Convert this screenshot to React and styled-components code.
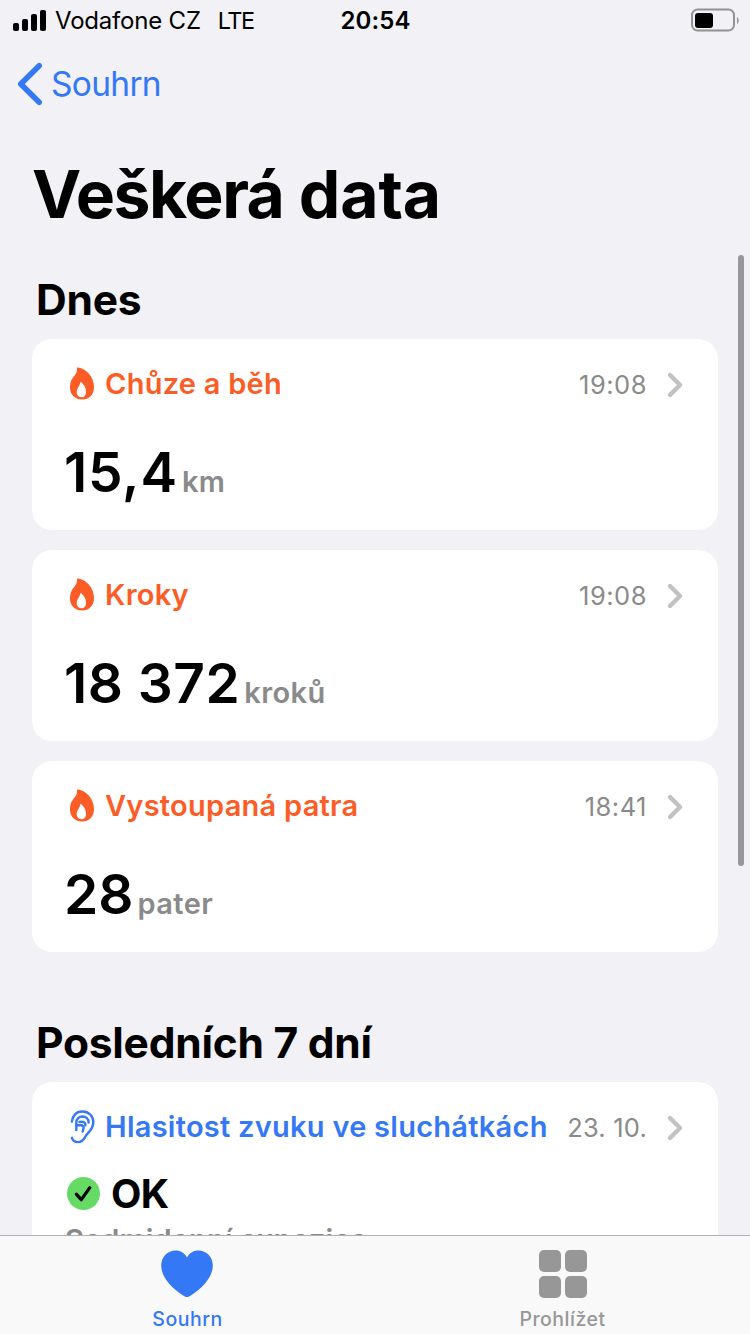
import React from 'react';
import styled, { createGlobalStyle } from 'styled-components';

const BLUE = '#3478f6';
const ORANGE = '#fc5c25';
const GRAY = '#8a8a8b';

const GlobalStyle = createGlobalStyle`
  *, *::before, *::after { box-sizing: border-box; }
  body { margin: 0; background: #f1f1f6; }
  svg { display: block; flex: none; overflow: visible; }
`;

const Screen = styled.main`
  position: relative;
  width: 750px;
  height: 1334px;
  overflow: hidden;
  background: #f1f1f6;
  color: #000;
  font-family: Inter, 'Liberation Sans', sans-serif;
  white-space: nowrap;
`;

const StatusBar = styled.header`
  display: grid;
  grid-template-columns: 1fr auto 1fr;
  align-items: center;
  height: 40px;
  padding: 0 11px 0 13px;
  font-size: 24px;
  line-height: 40px;
`;

const Carrier = styled.div`
  display: flex;
  align-items: center;
`;

const CarrierName = styled.span`
  margin: 1px 17px 0 9px;
  letter-spacing: -0.2px;
`;

const Network = styled.span`
  margin-top: 1px;
  font-size: 23.5px;
  letter-spacing: -1.5px;
`;

const Clock = styled.time`
  margin: 1px 1px 0 0;
  font-weight: 600;
  letter-spacing: 0.1px;
`;

const BatterySlot = styled.div`
  display: flex;
  justify-content: flex-end;
`;

const BackLink = styled.nav`
  display: flex;
  align-items: center;
  gap: 8px;
  height: 88px;
  padding-left: 17px;
  color: ${BLUE};
  font-size: 33.5px;
  letter-spacing: -0.7px;
`;

const Title = styled.h1`
  margin: 26px 0 0 32px;
  font-size: 66px;
  line-height: 80px;
  font-weight: 700;
  letter-spacing: -0.2px;
`;

const TightWord = styled.span`
  letter-spacing: -1.5px;
`;

const Section = styled.section`
  margin-top: ${({ $gap }) => $gap}px;
  padding: 0 32px;
`;

const SectionTitle = styled.h2`
  margin: 0 0 13px 4px;
  font-size: 42.5px;
  line-height: 52px;
  font-weight: 700;
  letter-spacing: -0.25px;
`;

const CardList = styled.div`
  display: flex;
  flex-direction: column;
  gap: 20px;
`;

const Card = styled.article`
  height: 191px;
  padding: 25px 35px 0 33px;
  border-radius: 20px;
  background: #fff;
`;

const CardHeader = styled.div`
  display: flex;
  align-items: center;
  height: 40px;
  padding-left: 3px;
  color: ${({ $color }) => $color};
`;

const CardTitle = styled.h3`
  flex: 1;
  margin: 0 0 0 10px;
  font-size: 29px;
  line-height: 40px;
  font-weight: 600;
  letter-spacing: 0.26px;
`;

const Stamp = styled.time`
  margin: 1px 20px 0 0;
  color: ${GRAY};
  font-size: 25.5px;
  letter-spacing: ${({ $spacing }) => $spacing};
`;

const Reading = styled.p`
  display: flex;
  align-items: baseline;
  gap: 4px;
  height: 64px;
  margin: 36px 0 0 -1px;
  line-height: 64px;
`;

const Amount = styled.span`
  font-size: 55px;
  font-weight: 600;
  letter-spacing: ${({ $spacing }) => $spacing};
`;

const Unit = styled.span`
  color: ${GRAY};
  font-size: 29px;
  font-weight: 600;
  letter-spacing: 0.4px;
`;

const State = styled.div`
  display: flex;
  align-items: center;
  gap: 11px;
  height: 46px;
  margin: 24px 0 0 2px;
  font-size: 39.5px;
  line-height: 46px;
  font-weight: 700;
  letter-spacing: -0.8px;

  svg { margin-bottom: 1px; }
`;

const Note = styled.p`
  margin: 5px 0 0;
  color: ${GRAY};
  font-size: 29px;
  line-height: 36px;
  font-weight: 600;
  letter-spacing: 0.15px;
`;

const ScrollThumb = styled.div`
  position: absolute;
  top: 255px;
  right: 6px;
  width: 6px;
  height: 611px;
  border-radius: 3px;
  background: #98989b;
`;

const TabBar = styled.footer`
  position: absolute;
  inset: auto 0 0;
  display: grid;
  grid-template-columns: 1fr 1fr;
  height: 99px;
  border-top: 1px solid #b0b0b1;
  background: #f9f9f9;
`;

const Tab = styled.div`
  display: flex;
  flex-direction: column;
  align-items: center;
  padding-top: 14px;
  color: ${({ $active }) => ($active ? BLUE : '#979797')};
  font-size: 19.5px;
  line-height: 24px;
  font-weight: 500;
  letter-spacing: 0.5px;

  span { margin-top: 9px; }
`;

const Signal = () => (
  <svg width="33" height="22" viewBox="0 0 33 22">
    <rect x="0" y="13" width="6" height="8" rx="2" />
    <rect x="9" y="9" width="6" height="12" rx="2" />
    <rect x="18" y="4" width="6" height="17" rx="2" />
    <rect x="27" y="0" width="6" height="21" rx="2" />
  </svg>
);

const Battery = () => (
  <svg width="48" height="24" viewBox="0 0 48 24">
    <rect x="1" y="0.5" width="42" height="21" rx="5.5" fill="none" stroke="#929294" strokeWidth="2" />
    <rect x="4" y="4" width="18" height="15" rx="3" />
    <path d="M46 8c2.2 1.2 2.2 5.8 0 7z" fill="#929294" />
  </svg>
);

const BackChevron = () => (
  <svg width="26" height="42" viewBox="0 0 26 42" fill="none" stroke="currentColor" strokeWidth="5.6" strokeLinecap="round" strokeLinejoin="round">
    <path d="M22.2 2.8 3.8 21 22.2 39.2" />
  </svg>
);

const Chevron = () => (
  <svg width="16" height="28" viewBox="0 0 16 28" fill="none" stroke="#c2c2c4" strokeWidth="4.4" strokeLinecap="round" strokeLinejoin="round">
    <path d="M3 5 13 15 3 25" />
  </svg>
);

const Flame = () => (
  <svg width="27" height="34" viewBox="0 0 27 34" fill="currentColor">
    <path
      fillRule="evenodd"
      d="M9 1.500C8.800.8 9.300.3 10.200.5 18 1.700 26 9.500 26 20c0 7.500-4.700 12.600-11.800 12.600S2 27.600 2 20.800C2 14.500 4 11.800 6.400 8.800 8.400 6.300 9.200 4 9 1.500zM13.200 15.300c-.5-.4-.9-.2-1 .4-.4 3.500-3.500 5.300-3.500 9.300 0 3.200 2 5.200 4.800 5.200s4.500-2.100 4.500-5.300c0-4-1.800-7.100-4.800-9.600z"
    />
  </svg>
);

const Ear = () => (
  <svg width="27" height="34" viewBox="0 0 27 34" fill="none" stroke="currentColor" strokeWidth="2.400" strokeLinecap="round" strokeLinejoin="round">
    <path d="M3.900 11.500C4.400 5.700 8.300 1.500 14.300 1.500c6.500 0 11 4.500 11 10.500 0 7-3.800 9-6.700 12.800-2.300 3-3.200 7.300-8.500 7.300-3.300 0-5.500-1.500-6.200-4.300" />
    <path d="M8.300 20V12.500c0-3.600 2.900-6 6.200-6s6.100 2.400 6.100 6" />
    <path d="M8.500 15.300h4.300c2.300 0 3.200 1.300 2.700 3.200l-.8 3M11.500 12c4-1 6 .8 6 3.200" />
  </svg>
);

const Check = () => (
  <svg width="33" height="33" viewBox="0 0 33 33">
    <circle cx="16.500" cy="16.500" r="16.500" fill="#65da65" />
    <path d="M9.300 17.200 14.300 22.700 22.800 10.700" fill="none" stroke="#000" strokeWidth="3.200" strokeLinecap="round" strokeLinejoin="round" />
  </svg>
);

const Heart = () => (
  <svg width="53" height="48" viewBox="0 0 53 48" fill="currentColor">
    <path d="M26 7.500C28.300 3.300 32.400.6 37.300.6 45.500.6 51.800 7.200 51.800 15.600c0 10.800-9.300 21.800-22.400 30.200-1 .7-2.300 1.300-3.400 1.300s-2.400-.6-3.400-1.300C9.500 37.400.2 26.400.2 15.600.2 7.200 6.500.6 14.700.6c4.900 0 9 2.700 11.300 6.900z" />
  </svg>
);

const Grid = () => (
  <svg width="48" height="48" viewBox="0 0 48 48" fill="currentColor">
    <rect width="22" height="22" rx="5" />
    <rect x="26" width="22" height="22" rx="5" />
    <rect y="26" width="22" height="22" rx="5" />
    <rect x="26" y="26" width="22" height="22" rx="5" />
  </svg>
);

const today = [
  { title: 'Chůze a běh', time: '19:08', amount: '15,4', unit: 'km', spacing: '0.8px' },
  { title: 'Kroky', time: '19:08', amount: '18 372', unit: 'kroků', spacing: '0.5px' },
  { title: 'Vystoupaná patra', time: '18:41', amount: '28', unit: 'pater', spacing: '0px' },
];

export default function App() {
  return (
    <Screen>
      <GlobalStyle />
      <StatusBar>
        <Carrier>
          <Signal />
          <CarrierName>Vodafone CZ</CarrierName>
          <Network>LTE</Network>
        </Carrier>
        <Clock>20:54</Clock>
        <BatterySlot><Battery /></BatterySlot>
      </StatusBar>
      <BackLink><BackChevron /><span>Souhrn</span></BackLink>
      <Title><TightWord>Veškerá</TightWord> data</Title>

      <Section $gap={40}>
        <SectionTitle>Dnes</SectionTitle>
        <CardList>
          {today.map((item) => (
            <Card key={item.title}>
              <CardHeader $color={ORANGE}>
                <Flame />
                <CardTitle>{item.title}</CardTitle>
                <Stamp $spacing="0.5px">{item.time}</Stamp>
                <Chevron />
              </CardHeader>
              <Reading>
                <Amount $spacing={item.spacing}>{item.amount}</Amount>
                <Unit>{item.unit}</Unit>
              </Reading>
            </Card>
          ))}
        </CardList>
      </Section>

      <Section $gap={65}>
        <SectionTitle>Posledních 7 dní</SectionTitle>
        <Card>
          <CardHeader $color={BLUE}>
            <Ear />
            <CardTitle>Hlasitost zvuku ve sluchátkách</CardTitle>
            <Stamp $spacing="0.2px">23. 10.</Stamp>
            <Chevron />
          </CardHeader>
          <State><Check />OK</State>
          <Note>Sedmidenní expozice</Note>
        </Card>
      </Section>

      <ScrollThumb />
      <TabBar>
        <Tab $active><Heart /><span>Souhrn</span></Tab>
        <Tab><Grid /><span>Prohlížet</span></Tab>
      </TabBar>
    </Screen>
  );
}
